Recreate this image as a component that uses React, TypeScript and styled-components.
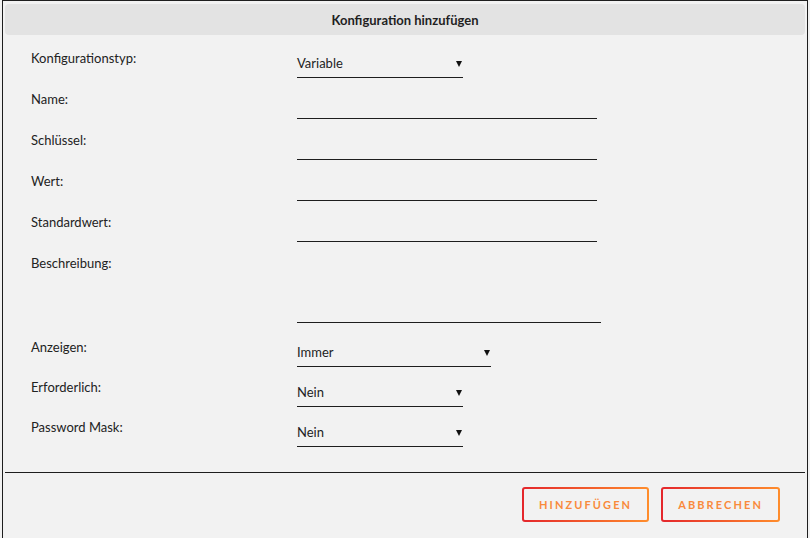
import React from "react";
import styled, { createGlobalStyle } from "styled-components";

const GlobalStyle = createGlobalStyle`
  html, body {
    margin: 0;
    padding: 0;
    background: #f2f2f2;
    overflow: hidden;
  }
  body {
    font-family: Lato, "Open Sans", "Noto Sans", sans-serif;
    color: #222;
  }
  * { box-sizing: border-box; }
`;

const Dialog = styled.div`
  margin-left: 2px;
  width: 806px;
  height: 538px;
  border: 1px solid #1e1e1e;
  border-bottom: none;
  padding: 3px 2px 0 2px;
  background: #f2f2f2;
  display: flex;
  flex-direction: column;
`;

const Header = styled.div`
  height: 31px;
  background: #e3e3e3;
  border-radius: 4px;
  display: flex;
  align-items: center;
  justify-content: center;
  font-weight: 700;
  font-size: 13px;
  color: #1f1f1f;
`;

const Form = styled.div`
  padding: 15px 0 0 26px;
  display: flex;
  flex-direction: column;
  gap: 13px;
  height: 437px;
`;

const Row = styled.div<{ $extra?: number; $pull?: number }>`
  display: grid;
  grid-template-columns: 266px auto;
  align-items: start;
  margin-bottom: ${(p) => p.$extra ?? 0}px;
  margin-top: ${(p) => -(p.$pull ?? 0)}px;
`;

const Label = styled.div`
  font-size: 13px;
  line-height: 16px;
  color: #222;
`;

const Select = styled.div<{ $w: number }>`
  width: ${(p) => p.$w}px;
  height: 28px;
  border-bottom: 1px solid #1e1e1e;
  display: flex;
  align-items: center;
  justify-content: space-between;
  padding: 0 1px 1px 0;
  font-size: 13px;
  color: #222;
`;

const Arrow = styled.span`
  width: 0;
  height: 0;
  border-left: 3px solid transparent;
  border-right: 3px solid transparent;
  border-top: 6px solid #111;
  margin-top: 2px;
`;

const Input = styled.div<{ $w: number; $h: number }>`
  width: ${(p) => p.$w}px;
  height: ${(p) => p.$h}px;
  border-bottom: 1px solid #1e1e1e;
`;

const Footer = styled.div`
  border-top: 1px solid #1e1e1e;
  display: flex;
  justify-content: flex-end;
  gap: 12px;
  padding: 14px 25px 0 0;
`;

const Button = styled.button`
  height: 35px;
  padding: 0 15px;
  border: 2px solid transparent;
  border-radius: 3px;
  background:
    linear-gradient(#f2f2f2, #f2f2f2) padding-box,
    linear-gradient(90deg, #e4262c, #ff8d2c) border-box;
  font-family: Lato, "Open Sans", sans-serif;
  font-weight: 700;
  font-size: 11px;
  letter-spacing: 2.1px;
  color: #f98a3c;
  cursor: pointer;
`;

type Field =
  | { label: string; kind: "select"; value: string; w: number; pull?: number }
  | { label: string; kind: "input"; w: number; h: number; extra?: number };

const fields: Field[] = [
  { label: "Konfigurationstyp:", kind: "select", value: "Variable", w: 166 },
  { label: "Name:", kind: "input", w: 300, h: 28 },
  { label: "Schlüssel:", kind: "input", w: 300, h: 28 },
  { label: "Wert:", kind: "input", w: 300, h: 28 },
  { label: "Standardwert:", kind: "input", w: 300, h: 28 },
  { label: "Beschreibung:", kind: "input", w: 304, h: 68, extra: 3 },
  { label: "Anzeigen:", kind: "select", value: "Immer", w: 194 },
  { label: "Erforderlich:", kind: "select", value: "Nein", w: 166, pull: 1 },
  { label: "Password Mask:", kind: "select", value: "Nein", w: 166, pull: 1 },
];

export default function App() {
  return (
    <>
      <GlobalStyle />
      <Dialog>
        <Header>Konfiguration hinzufügen</Header>
        <Form>
          {fields.map((f, i) => (
            <Row
              key={i}
              $extra={f.kind === "input" ? f.extra : 0}
              $pull={f.kind === "select" ? f.pull : 0}
            >
              <Label>{f.label}</Label>
              {f.kind === "select" ? (
                <Select $w={f.w}>
                  <span>{f.value}</span>
                  <Arrow />
                </Select>
              ) : (
                <Input $w={f.w} $h={f.h} />
              )}
            </Row>
          ))}
        </Form>
        <Footer>
          <Button>HINZUFÜGEN</Button>
          <Button>ABBRECHEN</Button>
        </Footer>
      </Dialog>
    </>
  );
}
